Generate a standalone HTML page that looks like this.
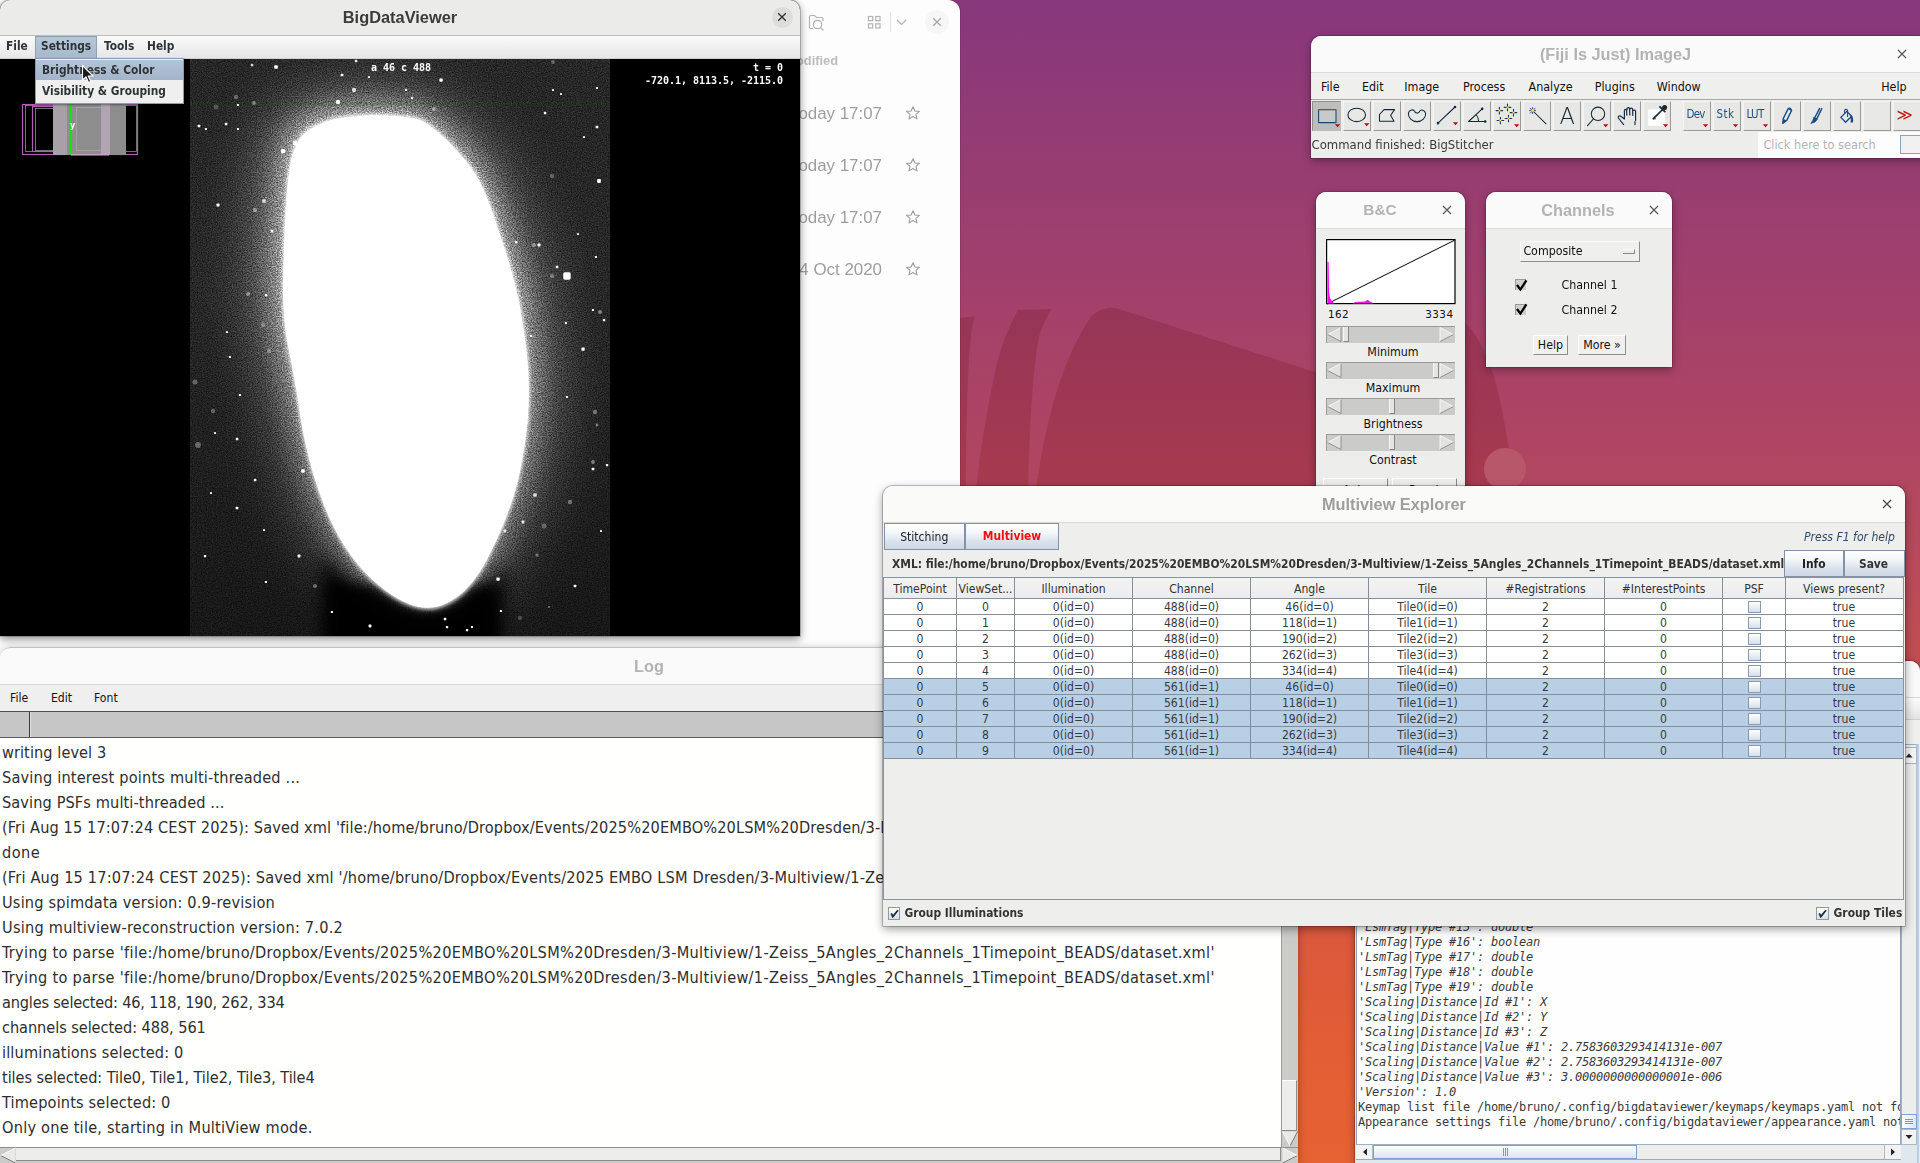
<!DOCTYPE html>
<html lang="en"><head><meta charset="utf-8"><title>Desktop</title>
<style>
html,body{margin:0;padding:0}
body{width:1920px;height:1163px;position:relative;overflow:hidden;background:#a1405f;font-family:"Liberation Sans","DejaVu Sans",sans-serif;color:#222}
.abs,.win,.win *{position:absolute;box-sizing:border-box}
.abs{position:absolute;box-sizing:border-box}
.win{overflow:hidden}
.t{white-space:pre;line-height:1}
.jf{font-family:"DejaVu Sans Condensed","Liberation Sans",sans-serif}
.lf{font-family:"Liberation Sans","DejaVu Sans",sans-serif}
.mono{font-family:"DejaVu Sans Mono","Liberation Mono",monospace}
.title{font-family:"Liberation Sans",sans-serif;font-weight:bold;font-size:16.3px;text-align:center;white-space:pre;line-height:1;will-change:transform}
svg{position:absolute;overflow:visible}
</style></head><body>
<!-- wallpaper -->
<div class="abs" id="wall" style="left:0;top:0;width:1920px;height:1163px;background:linear-gradient(180deg,#87377d 0%,#943c74 12%,#a2406b 25%,#ad4464 36%,#b84a5c 48%,#c8504c 62%,#d9573d 78%,#e35e35 90%,#e66233 100%)"></div>
<svg class="abs" style="left:0;top:0" width="1920" height="1163" viewBox="0 0 1920 1163">
 <defs><linearGradient id="wg1" gradientUnits="userSpaceOnUse" x1="0" y1="305" x2="0" y2="490"><stop offset="0" stop-color="#963558"/><stop offset="1" stop-color="#a73a4e"/></linearGradient>
 <linearGradient id="wg2" gradientUnits="userSpaceOnUse" x1="0" y1="305" x2="0" y2="490"><stop offset="0" stop-color="#a5416a"/><stop offset="1" stop-color="#ae4560"/></linearGradient></defs>
 <path d="M960 300 L1120 300 L1120 490 L960 490 Z" fill="url(#wg2)" opacity="0.55"/>
 <path d="M1104 309 Q1112 306 1122 310 L1315 372 L1320 374 L1320 490 L1036 490 Q1044 430 1059 384 Q1072 345 1090 318 Q1096 311 1104 309 Z" fill="url(#wg1)"/>
 <path d="M1018 310 L1051 309 Q1043 325 1040 333 Q1031 370 1028 490 L976 490 Q982 430 997 363 Q1004 335 1018 310 Z" fill="url(#wg1)"/>
 <path d="M960 318 L975 316 Q966 340 966 490 L960 490 Z" fill="url(#wg1)"/>
 <path d="M1465 322 Q1492 350 1504 420 L1516 490 L1465 490 Z" fill="url(#wg1)"/>
 <circle cx="1505" cy="469" r="21" fill="#b9576a"/>
</svg>
<style>
.ft{will-change:transform;font-family:"Liberation Sans",sans-serif;font-size:16.9px;color:#9e9e9e;white-space:pre;line-height:1;text-align:right;width:200px}
.logt{font-family:"DejaVu Sans Condensed","Liberation Sans",sans-serif;font-size:16.2px;letter-spacing:0.3px;color:#2e2e2e;white-space:pre;line-height:25px;left:2px;height:25px}
.jm{font-family:"DejaVu Sans Condensed","Liberation Sans",sans-serif;font-size:12px;color:#111;white-space:pre;line-height:1}
.con{font-family:"DejaVu Sans Mono","Liberation Mono",monospace;font-size:12px;letter-spacing:-0.225px;color:#3a3a3a;white-space:pre;line-height:15px;height:15px;left:1px}
.con.i{font-style:italic}
</style>
<!-- Files window (behind) -->
<div class="win" id="files" style="left:-20px;top:0;width:980px;height:720px;background:#fdfdfd;border-radius:0 12px 0 0;box-shadow:0 0 0 1px rgba(0,0,0,.1)">
<div style="left:945px;top:10px;width:24px;height:24px;border-radius:12px;background:#f6f6f6"></div>
<svg style="left:820px;top:0" width="160" height="44" viewBox="800 0 160 44" fill="none" stroke="#b2b2b2" stroke-width="1.2"><path d="M809.5 28.5 L809.5 17 Q809.5 15.5 811 15.5 L814.5 15.5 L816.5 17.5 L821.5 17.5 Q823 17.5 823 19 L823 21"/><path d="M809.5 28.5 L813 28.5"/><circle cx="817.5" cy="24.5" r="4.2"/><path d="M820.6 27.6 L823.5 30.5"/><rect x="868.5" y="16.5" width="4.2" height="4.2"/><rect x="875.8" y="16.5" width="4.2" height="4.2"/><rect x="868.5" y="23.8" width="4.2" height="4.2"/><rect x="875.8" y="23.8" width="4.2" height="4.2"/><path d="M890.5 12 L890.5 32" stroke="#e4e4e4"/><path d="M897 20 L901.5 24.5 L906 20"/><path d="M933.2 18.2 L940.8 25.8 M940.8 18.2 L933.2 25.8" stroke="#a8a8a8" stroke-width="1.3"/></svg>
<div class="t" style="left:658px;top:55.2px;width:200px;text-align:right;font-family:'Liberation Sans',sans-serif;font-weight:bold;font-size:12.8px;color:#bcbcbc;will-change:transform">Modified</div>
<div class="ft" style="left:702px;top:105.8px">Today 17:07</div>
<svg style="left:925px;top:105px" width="16" height="16" viewBox="0 0 16 16"><path d="M8 1.8 L9.9 6 L14.4 6.4 L11 9.4 L12 13.9 L8 11.5 L4 13.9 L5 9.4 L1.6 6.4 L6.1 6 Z" fill="none" stroke="#9d9d9d" stroke-width="1.1" stroke-linejoin="round"/></svg>
<div class="ft" style="left:702px;top:157.8px">Today 17:07</div>
<svg style="left:925px;top:157px" width="16" height="16" viewBox="0 0 16 16"><path d="M8 1.8 L9.9 6 L14.4 6.4 L11 9.4 L12 13.9 L8 11.5 L4 13.9 L5 9.4 L1.6 6.4 L6.1 6 Z" fill="none" stroke="#9d9d9d" stroke-width="1.1" stroke-linejoin="round"/></svg>
<div class="ft" style="left:702px;top:209.8px">Today 17:07</div>
<svg style="left:925px;top:209px" width="16" height="16" viewBox="0 0 16 16"><path d="M8 1.8 L9.9 6 L14.4 6.4 L11 9.4 L12 13.9 L8 11.5 L4 13.9 L5 9.4 L1.6 6.4 L6.1 6 Z" fill="none" stroke="#9d9d9d" stroke-width="1.1" stroke-linejoin="round"/></svg>
<div class="ft" style="left:702px;top:261.8px">4 Oct 2020</div>
<svg style="left:925px;top:261px" width="16" height="16" viewBox="0 0 16 16"><path d="M8 1.8 L9.9 6 L14.4 6.4 L11 9.4 L12 13.9 L8 11.5 L4 13.9 L5 9.4 L1.6 6.4 L6.1 6 Z" fill="none" stroke="#9d9d9d" stroke-width="1.1" stroke-linejoin="round"/></svg>
</div>
<!-- console window (behind) -->
<div class="win" id="console" style="left:1355px;top:661px;width:565px;height:502px;background:#fcfcfb;border-radius:10px 10px 0 0;box-shadow:0 0 0 1px rgba(90,30,20,.35),0 2px 8px rgba(0,0,0,.35)">
<div style="left:0;top:0;width:580px;height:37px;background:#fafafa;border-bottom:1px solid #d6d6d6"></div>
<div style="left:0;top:37px;width:580px;height:22px;background:linear-gradient(180deg,#fbfbfb 0%,#f1f1f1 45%,#e2e2e2 100%);border-bottom:1px solid #cfcfcf"></div>
<div style="left:0;top:59px;width:580px;height:443px;background:#efefee"></div>
<div style="left:0;top:83px;width:565px;height:419px;background:#dfe7ef"></div>
<div style="left:1px;top:83px;width:545px;height:401px;background:#fefefe;border:1px solid #8fa3bb"></div>
<div style="left:2px;top:62px;width:543px;height:421px;overflow:hidden">
<div class="con i" style="top:197px">'LsmTag|Type #15': double</div>
<div class="con i" style="top:212px">'LsmTag|Type #16': boolean</div>
<div class="con i" style="top:227px">'LsmTag|Type #17': double</div>
<div class="con i" style="top:242px">'LsmTag|Type #18': double</div>
<div class="con i" style="top:257px">'LsmTag|Type #19': double</div>
<div class="con i" style="top:272px">'Scaling|Distance|Id #1': X</div>
<div class="con i" style="top:287px">'Scaling|Distance|Id #2': Y</div>
<div class="con i" style="top:302px">'Scaling|Distance|Id #3': Z</div>
<div class="con i" style="top:317px">'Scaling|Distance|Value #1': 2.7583603293414131e-007</div>
<div class="con i" style="top:332px">'Scaling|Distance|Value #2': 2.7583603293414131e-007</div>
<div class="con i" style="top:347px">'Scaling|Distance|Value #3': 3.0000000000000001e-006</div>
<div class="con i" style="top:362px">'Version': 1.0</div>
<div class="con" style="top:377px">Keymap list file /home/bruno/.config/bigdataviewer/keymaps/keymaps.yaml not found, using defaults.</div>
<div class="con" style="top:392px">Appearance settings file /home/bruno/.config/bigdataviewer/appearance.yaml not found, using defaults.</div>
</div>
<div style="left:546px;top:83px;width:16px;height:401px;background:#ededec;border-left:1px solid #9fb0c4;border-right:1px solid #b8c2cc;border-top:1px solid #9fb0c4"></div>
<div style="left:546px;top:86px;width:16px;height:17px;background:#f4f4f4;border:1px solid #a9b4c0"></div>
<svg style="left:546px;top:86px" width="16" height="17" viewBox="0 0 16 17"><path d="M4.5 10.5 L8 6.5 L11.5 10.5 Z" fill="#222"/></svg>
<div style="left:546px;top:453px;width:16px;height:15px;background:linear-gradient(90deg,#fdfdfd,#dfe6ee);border:1px solid #7f9fd0"></div>
<svg style="left:546px;top:453px" width="16" height="15" viewBox="0 0 16 15"><path d="M4 5.5 H12 M4 7.5 H12 M4 9.5 H12" stroke="#8c98a6" stroke-width="1"/></svg>
<div style="left:546px;top:468px;width:16px;height:16px;background:#f2f2f2;border:1px solid #b0b8c2"></div>
<svg style="left:546px;top:468px" width="16" height="16" viewBox="0 0 16 16"><path d="M4.5 6 L11.5 6 L8 10 Z" fill="#222"/></svg>
<div style="left:1px;top:483px;width:545px;height:16px;background:#ededec;border-top:1px solid #9fb0c4;border-bottom:1px solid #a8a8a8"></div>
<div style="left:2px;top:484px;width:16px;height:14px;background:#f2f2f2;border-right:1px solid #b0b8c2"></div>
<svg style="left:2px;top:484px" width="16" height="14" viewBox="0 0 16 14"><path d="M10 3.5 L10 10.5 L6 7 Z" fill="#222"/></svg>
<div style="left:18px;top:484px;width:264px;height:14px;background:linear-gradient(180deg,#fdfdfd,#dbe4ee);border:1px solid #7f9fd0"></div>
<svg style="left:143px;top:484px" width="16" height="14" viewBox="0 0 16 14"><path d="M5.5 3 V11 M7.5 3 V11 M9.5 3 V11" stroke="#8c98a6" stroke-width="1"/></svg>
<div style="left:529px;top:484px;width:17px;height:14px;background:#f2f2f2;border-left:1px solid #b0b8c2"></div>
<svg style="left:530px;top:484px" width="16" height="14" viewBox="0 0 16 14"><path d="M6 3.5 L6 10.5 L10 7 Z" fill="#222"/></svg>
<div style="left:562px;top:83px;width:18px;height:419px;background:linear-gradient(90deg,#b9cde4 0,#b9cde4 2px,#e8eef5 2px)"></div>
</div>
<style>
.ijm{font-family:"DejaVu Sans Condensed","Liberation Sans",sans-serif;font-size:12.4px;color:#111;white-space:pre;line-height:1}
.awt{font-family:"DejaVu Sans Condensed","Liberation Sans",sans-serif;font-size:12.3px;color:#111;white-space:pre;line-height:1}
.tool{background:#e7e7e6;border-right:1px solid #9a9a9a;border-bottom:1px solid #9a9a9a;border-top:1px solid #f4f4f4;border-left:1px solid #f4f4f4;width:29px;height:30px;top:101px}
.tool.dn{background:#bdbdbc;border:1px solid #bdbdbc;border-top:1px solid #8e8e8e;border-left:1px solid #8e8e8e}
.tl{font-family:"DejaVu Sans Condensed","Liberation Sans",sans-serif;font-size:11.5px;color:#1d4f86;white-space:pre;line-height:1}
</style>
<!-- ImageJ main window -->
<div class="win" id="imagej" style="left:1311px;top:36px;width:620px;height:122px;background:#ededec;border-radius:10px 10px 0 0;box-shadow:0 0 0 1px rgba(60,10,50,.25),0 3px 9px rgba(0,0,0,.35)">
<div style="left:0;top:0;width:620px;height:37px;background:#fafafa;border-bottom:1px solid #d9d9d9"></div>
<div class="title" style="left:0;top:10px;width:609px;color:#b3b3b3;font-size:16.3px">(Fiji Is Just) ImageJ</div>
<svg style="left:585px;top:12px" width="12" height="12" viewBox="0 0 12 12"><path d="M2 2 L10 10 M10 2 L2 10" stroke="#5c5c5c" stroke-width="1.3" fill="none"/></svg>
<div style="left:0;top:37px;width:620px;height:27px;background:#efefee;border-bottom:1px solid #a9a9a9"></div>
<div class="ijm" style="left:10px;top:45px">File</div>
<div class="ijm" style="left:51px;top:45px">Edit</div>
<div class="ijm" style="left:93.29999999999995px;top:45px">Image</div>
<div class="ijm" style="left:152px;top:45px">Process</div>
<div class="ijm" style="left:217.5999999999999px;top:45px">Analyze</div>
<div class="ijm" style="left:283.79999999999995px;top:45px">Plugins</div>
<div class="ijm" style="left:345.79999999999995px;top:45px">Window</div>
<div class="ijm" style="left:570.2px;top:45px">Help</div>
<div style="left:0;top:64px;width:620px;height:31px;background:#eeeeed"></div>
<div class="tool dn" style="left:1px;top:65px"></div>
<div class="tool" style="left:31.5px;top:65px;width:28.5px"></div>
<div class="tool" style="left:61.5px;top:65px;width:28.5px"></div>
<div class="tool" style="left:91.5px;top:65px;width:28.5px"></div>
<div class="tool" style="left:121.5px;top:65px;width:28.5px"></div>
<div class="tool" style="left:151.5px;top:65px;width:28.5px"></div>
<div class="tool" style="left:181.5px;top:65px;width:28.5px"></div>
<div class="tool" style="left:211.5px;top:65px;width:28.5px"></div>
<div class="tool" style="left:241.5px;top:65px;width:28.5px"></div>
<div class="tool" style="left:271.5px;top:65px;width:28.5px"></div>
<div class="tool" style="left:301.5px;top:65px;width:28.5px"></div>
<div class="tool" style="left:331.5px;top:65px;width:28.5px"></div>
<div class="tool" style="left:371.5px;top:65px;width:28.5px"></div>
<div class="tool" style="left:401.5px;top:65px;width:28.5px"></div>
<div class="tool" style="left:431.5px;top:65px;width:28.5px"></div>
<div class="tool" style="left:461.5px;top:65px;width:28.5px"></div>
<div class="tool" style="left:491.5px;top:65px;width:28.5px"></div>
<div class="tool" style="left:521.5px;top:65px;width:28.5px"></div>
<div class="tool" style="left:551.5px;top:65px;width:28.5px"></div>
<div class="tool" style="left:581.5px;top:65px;width:28.5px"></div>
<svg style="left:0;top:0" width="620" height="122" viewBox="1311 36 620 122" fill="none" stroke="#14283a" stroke-width="1.05" stroke-linecap="round" stroke-linejoin="round">
<rect x="1318.6" y="109.8" width="17.4" height="12.8" fill="#c9c9c9" stroke="#15476f"/><path d="M1334.8 124.2 L1340.2 124.2 L1337.5 127.2 Z" fill="#b0101f" stroke="none"/>
<ellipse cx="1356.7" cy="114.9" rx="8.8" ry="6.7"/><path d="M1364 123.2 L1369.4 123.2 L1366.7 126.2 Z" fill="#b0101f" stroke="none"/>
<path d="M1379.5 121.3 L1379.5 114.5 L1384 109.6 L1394.6 109.6 L1390.6 115.3 L1394 121.3 Z"/>
<path d="M1414.6 111.2 C1415 113.6 1419 113.8 1419.6 111.4 C1420.6 109.2 1425 109.6 1425.6 113.4 C1426.2 117.6 1422 121.6 1417 121.6 C1412 121.6 1407.8 117.6 1408.4 113.4 C1409 109.6 1413.6 109 1414.6 111.2 Z"/>
<path d="M1438 123.2 L1455 107"/><circle cx="1438" cy="123.2" r="0.8" fill="#111"/><circle cx="1455" cy="107" r="0.8" fill="#111"/><path d="M1452.8 122.2 L1458.2 122.2 L1455.5 125.2 Z" fill="#b0101f" stroke="none"/>
<path d="M1482.2 108.8 L1468.6 121.5 L1485.2 121.5"/><path d="M1476.5 115 Q1478.6 117.6 1478.6 121.3" stroke-width="1"/><circle cx="1482.2" cy="108.8" r="0.8" fill="#111"/><circle cx="1485.2" cy="121.5" r="0.8" fill="#111"/>
<path d="M1496.1000000000001 110.6 H1502.7 M1499.4 107.3 V113.89999999999999" stroke="#15336a" stroke-width="1.1"/><rect x="1498.4" y="109.6" width="2" height="2" fill="#f5ea1c" stroke="none"/>
<path d="M1504.2 107.4 H1510.8 M1507.5 104.10000000000001 V110.7" stroke="#15336a" stroke-width="1.1"/><rect x="1506.5" y="106.4" width="2" height="2" fill="#f5ea1c" stroke="none"/>
<path d="M1510.2 112.6 H1516.8 M1513.5 109.3 V115.89999999999999" stroke="#15336a" stroke-width="1.1"/><rect x="1512.5" y="111.6" width="2" height="2" fill="#f5ea1c" stroke="none"/>
<path d="M1497.1000000000001 120.5 H1503.7 M1500.4 117.2 V123.8" stroke="#15336a" stroke-width="1.1"/><rect x="1499.4" y="119.5" width="2" height="2" fill="#f5ea1c" stroke="none"/>
<path d="M1505.2 118.5 H1511.8 M1508.5 115.2 V121.8" stroke="#15336a" stroke-width="1.1"/><rect x="1507.5" y="117.5" width="2" height="2" fill="#f5ea1c" stroke="none"/>
<path d="M1514 124.2 L1519.4 124.2 L1516.7 127.2 Z" fill="#b0101f" stroke="none"/>
<path d="M1534 112 L1546 123.8"/><path d="M1530.3 108.3 L1535 113 M1535 108.3 L1530.3 113 M1532.6 107.6 V113.6 M1529.6 110.6 H1535.6" stroke="#1a3a6a" stroke-width="0.9"/><circle cx="1532.6" cy="110.6" r="1.5" fill="#f5ea1c" stroke="none"/>
<text x="1567.2" y="123.6" text-anchor="middle" font-family="DejaVu Sans Light,DejaVu Sans,Liberation Sans,sans-serif" font-weight="200" font-size="22.6" fill="#14283a" stroke="none">A</text>
<circle cx="1598" cy="113.8" r="6.7"/><path d="M1593.4 119 L1587.5 125.6"/><path d="M1603 124.2 L1608.4 124.2 L1605.7 127.2 Z" fill="#b0101f" stroke="none"/>
<path d="M1623.6 124.6 L1618.4 118 Q1617.6 115.6 1620.4 116 L1624.4 119 L1624.4 110.2 Q1625.4 108.6 1626.6 110.2 L1626.8 115.2 M1627 110 L1627 108.4 Q1628.2 106.8 1629.6 108.4 L1629.8 115 M1630 109 Q1631.2 107.4 1632.6 109 L1632.8 115.4 M1633 110.6 Q1634.4 109.4 1635.6 111 L1635.6 120.4 M1635 121.6 L1635 124.6" stroke="#1a2f45" stroke-width="1.2"/>
<rect x="1648.2" y="109.4" width="16.8" height="16.4" fill="#fff" stroke="none"/><path d="M1653.4 118.6 L1661.8 110.2" stroke-width="1.6"/><path d="M1653 118.8 H1655.4" stroke-width="1"/><path d="M1660 106.8 L1664.8 111.6" stroke-width="1.8"/><circle cx="1664.6" cy="107.4" r="2.5" fill="#222" stroke="none"/><path d="M1662.8 124.2 L1668.2 124.2 L1665.5 127.2 Z" fill="#b0101f" stroke="none"/>
<path d="M1702.8 124.2 L1708.2 124.2 L1705.5 127.2 Z" fill="#b0101f" stroke="none"/><path d="M1732.8 124.2 L1738.2 124.2 L1735.5 127.2 Z" fill="#b0101f" stroke="none"/><path d="M1762.8 124.2 L1768.2 124.2 L1765.5 127.2 Z" fill="#b0101f" stroke="none"/>
<path d="M1789 109 L1791.6 110.4 L1786.6 120.6 L1782.8 123.4 L1783.2 118.6 L1788.2 108.6 Q1790.4 107 1791.6 110.4" stroke="#174a86" stroke-width="1.3"/><path d="M1783.2 118.8 L1786.4 120.6 L1782.8 123.6 Z" fill="#174a86" stroke="none"/>
<path d="M1819.6 108.4 L1814.6 118 M1821.8 108.6 L1817 118.4" stroke="#174a86" stroke-width="1.4"/><path d="M1814 117.6 L1817.4 119 Q1816 122.6 1810.8 123.4 Q1813 121 1814 117.6 Z" fill="#174a86" stroke="#174a86" stroke-width="0.8"/>
<path d="M1840.8 117.4 L1846.8 111.4 L1851.6 116.2 L1845.6 122.2 Z" stroke="#174a86" stroke-width="1.3"/><path d="M1844.6 113 V110.4 Q1846 108 1847.6 110.4 V116.4" stroke="#174a86" stroke-width="1.1"/><path d="M1851.4 115 Q1853.8 118 1853 122.4 L1850.6 122.4 Q1851.2 118.6 1850.2 116.6 Z" fill="#174a86" stroke="none"/>
<text x="1896.4" y="119.6" font-family="DejaVu Sans,Liberation Sans,sans-serif" font-size="15.5" fill="#c01818" stroke="none">≫</text>
</svg>
<div class="tl" style="left:375.5999999999999px;top:73.4px;letter-spacing:-0.9px">Dev</div>
<div class="tl" style="left:405.4000000000001px;top:73.4px;letter-spacing:0.5px">Stk</div>
<div class="tl" style="left:435.5999999999999px;top:73.4px;letter-spacing:-0.7px">LUT</div>
<div class="awt" style="left:0.5px;top:102px;font-size:13px;color:#3a3a3a">Command finished: BigStitcher</div>
<div style="left:447px;top:96px;width:170px;height:26px;background:#fdfdfd"></div>
<div class="awt" style="left:452.4000000000001px;top:103px;font-size:12.6px;color:#b4b4b4">Click here to search</div>
<div style="left:589px;top:99px;width:24px;height:19px;background:#f0f0f0;border:1px solid #8fa3b8"></div>
</div>
<!-- B&C window -->
<div class="win" id="bc" style="left:1316px;top:192px;width:149px;height:320px;background:#ededec;border-radius:10px 10px 0 0;box-shadow:0 0 0 1px rgba(60,10,40,.22),0 3px 9px rgba(0,0,0,.35)">
<div style="left:0;top:0;width:149px;height:37px;background:#fafafa;border-bottom:1px solid #dcdcdc"></div>
<div class="title" style="left:3.5px;top:10px;width:120px;color:#b3b3b3;font-size:15.4px">B&amp;C</div>
<svg style="left:125px;top:12px" width="12" height="12" viewBox="0 0 12 12"><path d="M2 2 L10 10 M10 2 L2 10" stroke="#5c5c5c" stroke-width="1.3" fill="none"/></svg>
<svg style="left:10px;top:47px" width="130" height="66" viewBox="1326 239 130 66"><rect x="1326.6" y="239.6" width="128.4" height="64" fill="#fff" stroke="#000" stroke-width="1.2"/><path d="M1327 304 L1455 240" stroke="#000" stroke-width="1"/><path d="M1327.4 303.5 L1327.4 262 L1328.6 262 L1329 292 L1330 298 L1332 301.5 L1335 303.5 Z" fill="#ff00ff"/><path d="M1353 303.5 L1355 302 L1365 301.6 L1367.6 299.8 L1370 301.6 L1374 303.5 Z" fill="#e020e0"/></svg>
<div class="awt" style="left:12px;top:117.39999999999998px;font-family:'DejaVu Sans',sans-serif;font-size:10.4px;letter-spacing:0.4px">162</div>
<div class="awt" style="left:69px;top:117.39999999999998px;width:68.4px;text-align:right;font-family:'DejaVu Sans',sans-serif;font-size:10.4px;letter-spacing:0.4px">3334</div>
<div style="left:10px;top:134px;width:129px;height:17px;background:#cbcbca;border-top:1px solid #9a9a9a;border-left:1px solid #9a9a9a"></div>
<svg style="left:10px;top:134px" width="129" height="17" viewBox="0 0 129 17"><path d="M15 1.5 L1.5 8.5 L15 15.5 Z" fill="#e2e2e1"/><path d="M15 1.5 L1.5 8.5" stroke="#f6f6f6" fill="none"/><path d="M1.5 8.5 L15 15.5 L15 1.5" stroke="#8a8a8a" stroke-width="0.9" fill="none"/><path d="M114 1.5 L127.5 8.5 L114 15.5 Z" fill="#e2e2e1"/><path d="M114 1.5 L114 15.5" stroke="#f6f6f6" fill="none"/><path d="M114 1.5 L127.5 8.5" stroke="#f6f6f6" fill="none"/><path d="M127.5 8.5 L114 15.5" stroke="#8a8a8a" stroke-width="0.9" fill="none"/></svg>
<div style="left:26.5px;top:135px;width:6px;height:15px;background:#e4e4e3;border-right:1px solid #858585;border-bottom:1px solid #858585;border-left:1px solid #f8f8f8"></div>
<div class="awt" style="left:10px;top:154px;width:134px;text-align:center">Minimum</div>
<div style="left:10px;top:170px;width:129px;height:17px;background:#cbcbca;border-top:1px solid #9a9a9a;border-left:1px solid #9a9a9a"></div>
<svg style="left:10px;top:170px" width="129" height="17" viewBox="0 0 129 17"><path d="M15 1.5 L1.5 8.5 L15 15.5 Z" fill="#e2e2e1"/><path d="M15 1.5 L1.5 8.5" stroke="#f6f6f6" fill="none"/><path d="M1.5 8.5 L15 15.5 L15 1.5" stroke="#8a8a8a" stroke-width="0.9" fill="none"/><path d="M114 1.5 L127.5 8.5 L114 15.5 Z" fill="#e2e2e1"/><path d="M114 1.5 L114 15.5" stroke="#f6f6f6" fill="none"/><path d="M114 1.5 L127.5 8.5" stroke="#f6f6f6" fill="none"/><path d="M127.5 8.5 L114 15.5" stroke="#8a8a8a" stroke-width="0.9" fill="none"/></svg>
<div style="left:117px;top:171px;width:6px;height:15px;background:#e4e4e3;border-right:1px solid #858585;border-bottom:1px solid #858585;border-left:1px solid #f8f8f8"></div>
<div class="awt" style="left:10px;top:190px;width:134px;text-align:center">Maximum</div>
<div style="left:10px;top:206px;width:129px;height:17px;background:#cbcbca;border-top:1px solid #9a9a9a;border-left:1px solid #9a9a9a"></div>
<svg style="left:10px;top:206px" width="129" height="17" viewBox="0 0 129 17"><path d="M15 1.5 L1.5 8.5 L15 15.5 Z" fill="#e2e2e1"/><path d="M15 1.5 L1.5 8.5" stroke="#f6f6f6" fill="none"/><path d="M1.5 8.5 L15 15.5 L15 1.5" stroke="#8a8a8a" stroke-width="0.9" fill="none"/><path d="M114 1.5 L127.5 8.5 L114 15.5 Z" fill="#e2e2e1"/><path d="M114 1.5 L114 15.5" stroke="#f6f6f6" fill="none"/><path d="M114 1.5 L127.5 8.5" stroke="#f6f6f6" fill="none"/><path d="M127.5 8.5 L114 15.5" stroke="#8a8a8a" stroke-width="0.9" fill="none"/></svg>
<div style="left:72.5px;top:207px;width:6px;height:15px;background:#e4e4e3;border-right:1px solid #858585;border-bottom:1px solid #858585;border-left:1px solid #f8f8f8"></div>
<div class="awt" style="left:10px;top:226px;width:134px;text-align:center">Brightness</div>
<div style="left:10px;top:242px;width:129px;height:17px;background:#cbcbca;border-top:1px solid #9a9a9a;border-left:1px solid #9a9a9a"></div>
<svg style="left:10px;top:242px" width="129" height="17" viewBox="0 0 129 17"><path d="M15 1.5 L1.5 8.5 L15 15.5 Z" fill="#e2e2e1"/><path d="M15 1.5 L1.5 8.5" stroke="#f6f6f6" fill="none"/><path d="M1.5 8.5 L15 15.5 L15 1.5" stroke="#8a8a8a" stroke-width="0.9" fill="none"/><path d="M114 1.5 L127.5 8.5 L114 15.5 Z" fill="#e2e2e1"/><path d="M114 1.5 L114 15.5" stroke="#f6f6f6" fill="none"/><path d="M114 1.5 L127.5 8.5" stroke="#f6f6f6" fill="none"/><path d="M127.5 8.5 L114 15.5" stroke="#8a8a8a" stroke-width="0.9" fill="none"/></svg>
<div style="left:72.5px;top:243px;width:6px;height:15px;background:#e4e4e3;border-right:1px solid #858585;border-bottom:1px solid #858585;border-left:1px solid #f8f8f8"></div>
<div class="awt" style="left:10px;top:262px;width:134px;text-align:center">Contrast</div>
<div style="left:7px;top:286px;width:65px;height:22px;background:#eeeeed;border-top:1px solid #fff;border-left:1px solid #fff;border-right:1px solid #8a8a8a;border-bottom:1px solid #8a8a8a"></div>
<div class="awt" style="left:7px;top:291.6px;width:65px;text-align:center">Auto</div>
<div style="left:76px;top:286px;width:65px;height:22px;background:#eeeeed;border-top:1px solid #fff;border-left:1px solid #fff;border-right:1px solid #8a8a8a;border-bottom:1px solid #8a8a8a"></div>
<div class="awt" style="left:76px;top:291.6px;width:65px;text-align:center">Reset</div>
</div>
<!-- Channels window -->
<div class="win" id="channels" style="left:1486px;top:192px;width:186px;height:175px;background:#ededec;border-radius:10px 10px 0 0;box-shadow:0 0 0 1px rgba(60,10,40,.22),0 3px 9px rgba(0,0,0,.35)">
<div style="left:0;top:0;width:186px;height:37px;background:#fafafa;border-bottom:1px solid #dcdcdc"></div>
<div class="title" style="left:21.5px;top:10px;width:140px;color:#b3b3b3;font-size:16.3px">Channels</div>
<svg style="left:162px;top:12px" width="12" height="12" viewBox="0 0 12 12"><path d="M2 2 L10 10 M10 2 L2 10" stroke="#5c5c5c" stroke-width="1.3" fill="none"/></svg>
<div style="left:33.5px;top:48.5px;width:120.5px;height:21.5px;background:#efefee;border-top:1px solid #fbfbfb;border-left:1px solid #fbfbfb;border-right:1px solid #8e8e8e;border-bottom:1px solid #8e8e8e"></div>
<div class="awt" style="left:37.40000000000009px;top:53.30000000000001px">Composite</div>
<div style="left:137px;top:56.599999999999994px;width:12px;height:5px;background:#ececec;border-right:1px solid #8a8a8a;border-bottom:1px solid #8a8a8a;border-top:1px solid #fafafa"></div>
<div style="left:29px;top:87.0px;width:11px;height:11px;background:#cfcfcf;border-top:1px solid #9b9b9b;border-left:1px solid #9b9b9b"></div>
<svg style="left:28px;top:84.5px" width="16" height="16" viewBox="0 0 16 16"><path d="M3 8 L6.4 12.6 L12.4 3.4" stroke="#000" stroke-width="2.3" fill="none" stroke-linejoin="miter"/></svg>
<div class="awt" style="left:75.5px;top:86.89999999999998px">Channel 1</div>
<div style="left:29px;top:111.80000000000001px;width:11px;height:11px;background:#cfcfcf;border-top:1px solid #9b9b9b;border-left:1px solid #9b9b9b"></div>
<svg style="left:28px;top:109.30000000000001px" width="16" height="16" viewBox="0 0 16 16"><path d="M3 8 L6.4 12.6 L12.4 3.4" stroke="#000" stroke-width="2.3" fill="none" stroke-linejoin="miter"/></svg>
<div class="awt" style="left:75.5px;top:111.69999999999999px">Channel 2</div>
<div style="left:46.700000000000045px;top:142.7px;width:35.5px;height:20px;background:#f0f0ef;border-top:1px solid #fcfcfc;border-left:1px solid #fcfcfc;border-right:1px solid #8e8e8e;border-bottom:1px solid #8e8e8e"></div>
<div class="awt" style="left:46.700000000000045px;top:147.39999999999998px;width:35.5px;text-align:center">Help</div>
<div style="left:91.79999999999995px;top:142.7px;width:48.4px;height:20px;background:#f0f0ef;border-top:1px solid #fcfcfc;border-left:1px solid #fcfcfc;border-right:1px solid #8e8e8e;border-bottom:1px solid #8e8e8e"></div>
<div class="awt" style="left:91.79999999999995px;top:147.39999999999998px;width:48.4px;text-align:center">More »</div>
</div>
<!-- Log window -->
<div class="win" id="log" style="left:0;top:647px;width:1298px;height:516px;background:#fffffd;border-radius:10px 10px 0 0;box-shadow:0 2px 8px rgba(0,0,0,.3)">
<div style="left:0;top:0;width:1298px;height:38px;background:#fafafa;border-bottom:1px solid #dadada;border-top:1px solid #c4c4c4;border-radius:10px 10px 0 0"></div>
<div class="title" style="left:0;top:11px;width:1298px;color:#b3b3b3;font-size:16.3px">Log</div>
<div style="left:0;top:38px;width:1298px;height:27px;background:#efefef"></div>
<div class="jm" style="left:10px;top:45px;font-size:12.1px">File</div>
<div class="jm" style="left:51px;top:45px;font-size:12.1px">Edit</div>
<div class="jm" style="left:94px;top:45px;font-size:12.1px">Font</div>
<div style="left:0;top:64px;width:1298px;height:27px;background:#c6c6c6;border-top:1px solid #505050;border-bottom:1px solid #5a5a5a"></div>
<div style="left:29px;top:65px;width:1px;height:25px;background:#3c3c3c"></div>
<div style="left:30px;top:65px;width:1px;height:25px;background:#e2e2e2"></div>
<div style="left:0;top:91px;width:1282px;height:409px;overflow:hidden">
<div class="logt" style="top:2.1999999999999993px;letter-spacing:0.06px">writing level 3</div>
<div class="logt" style="top:27.2px;letter-spacing:0.18px">Saving interest points multi-threaded ...</div>
<div class="logt" style="top:52.2px;letter-spacing:0.1px">Saving PSFs multi-threaded ...</div>
<div class="logt" style="top:77.2px;letter-spacing:0.11px">(Fri Aug 15 17:07:24 CEST 2025): Saved xml 'file:/home/bruno/Dropbox/Events/2025%20EMBO%20LSM%20Dresden/3-Multiview/1-Zeiss_5Angles_2Channels_1Timepoint_BEADS/dataset.xml'</div>
<div class="logt" style="top:102.2px;letter-spacing:0.48px">done</div>
<div class="logt" style="top:127.2px;letter-spacing:0.17px">(Fri Aug 15 17:07:24 CEST 2025): Saved xml '/home/bruno/Dropbox/Events/2025 EMBO LSM Dresden/3-Multiview/1-Zeiss_5Angles_2Channels_1Timepoint_BEADS/dataset.xml'</div>
<div class="logt" style="top:152.2px;letter-spacing:0.19px">Using spimdata version: 0.9-revision</div>
<div class="logt" style="top:177.2px;letter-spacing:0.22px">Using multiview-reconstruction version: 7.0.2</div>
<div class="logt" style="top:202.2px;letter-spacing:0.31px">Trying to parse 'file:/home/bruno/Dropbox/Events/2025%20EMBO%20LSM%20Dresden/3-Multiview/1-Zeiss_5Angles_2Channels_1Timepoint_BEADS/dataset.xml'</div>
<div class="logt" style="top:227.2px;letter-spacing:0.31px">Trying to parse 'file:/home/bruno/Dropbox/Events/2025%20EMBO%20LSM%20Dresden/3-Multiview/1-Zeiss_5Angles_2Channels_1Timepoint_BEADS/dataset.xml'</div>
<div class="logt" style="top:252.2px;letter-spacing:-0.2px">angles selected: 46, 118, 190, 262, 334</div>
<div class="logt" style="top:277.2px;letter-spacing:-0.07px">channels selected: 488, 561</div>
<div class="logt" style="top:302.2px;letter-spacing:0.13px">illuminations selected: 0</div>
<div class="logt" style="top:327.2px;letter-spacing:-0.08px">tiles selected: Tile0, Tile1, Tile2, Tile3, Tile4</div>
<div class="logt" style="top:352.2px;letter-spacing:0.15px">Timepoints selected: 0</div>
<div class="logt" style="top:377.2px;letter-spacing:0.22px">Only one tile, starting in MultiView mode.</div>
</div>
<div style="left:1281px;top:91px;width:17px;height:409px;background:#cbcbc8;border-left:1px solid #9a9a9a"></div>
<div style="left:1282px;top:433px;width:15px;height:51px;background:#ededeb;border-right:1px solid #8c8c8c;border-bottom:1px solid #8c8c8c;border-top:1px solid #fff"></div>
<svg style="left:1282px;top:484px" width="16" height="16" viewBox="0 0 16 16"><path d="M0.5 0.5 L15.5 0.5 L8 15 Z" fill="#e9e9e7"/><path d="M15.5 0.5 L8 15" stroke="#7a7a7a" stroke-width="1" fill="none"/><path d="M0.5 0.5 L8 15" stroke="#f8f8f8" stroke-width="1" fill="none"/></svg>
<div style="left:0;top:500px;width:1298px;height:16px;background:#cbcbc8;border-top:1px solid #8e8e8e"></div>
<div style="left:16px;top:501px;width:1265px;height:13px;background:#ededeb;border-right:1px solid #8c8c8c;border-bottom:1px solid #8c8c8c"></div>
<svg style="left:0;top:501px" width="16" height="15" viewBox="0 0 16 15"><path d="M15.5 0 L15.5 15 L0.5 7.5 Z" fill="#e9e9e7"/><path d="M15.5 15 L0.5 7.5" stroke="#7a7a7a" fill="none"/><path d="M15.5 0 L0.5 7.5" stroke="#f8f8f8" fill="none"/></svg>
<svg style="left:1282px;top:501px" width="16" height="15" viewBox="0 0 16 15"><path d="M0.5 0 L0.5 15 L15.5 7.5 Z" fill="#e9e9e7"/><path d="M0.5 15 L15.5 7.5" stroke="#7a7a7a" fill="none"/><path d="M0.5 0 L15.5 7.5" stroke="#f8f8f8" fill="none"/></svg>
</div>
<style>
.mv{font-family:"DejaVu Sans Condensed","Liberation Sans",sans-serif;font-size:12.1px;color:#363b42;white-space:pre;line-height:1}
.mvb{font-weight:bold;font-size:11.9px}
.btn{background:linear-gradient(180deg,#ffffff 0%,#f3f6f9 35%,#d9e2ec 70%,#ccd8e4 100%);border:1px solid #8393a6}
.cell{text-align:center;height:16px;line-height:17.6px}
.cb{width:10px;height:10px;background:linear-gradient(180deg,#ffffff,#d4dfea);border:1px solid #8a99ab}
</style>
<!-- Multiview Explorer window -->
<div class="win" id="mve" style="left:883px;top:486px;width:1022px;height:440px;background:#eeeeed;border-radius:10px 10px 0 0;box-shadow:0 0 0 1px rgba(0,0,0,.22),0 3px 10px rgba(0,0,0,.4)">
<div style="left:0;top:0;width:1022px;height:37px;background:#fafaf9;border-bottom:1px solid #d8d8d8"></div>
<div class="title" style="left:0;top:10px;width:1022px;color:#9e9e9e;font-size:16.3px">Multiview Explorer</div>
<svg style="left:998px;top:12px" width="12" height="12" viewBox="0 0 12 12"><path d="M2 2 L10 10 M10 2 L2 10" stroke="#4a4a4a" stroke-width="1.3" fill="none"/></svg>
<div class="btn" style="left:0.5px;top:37px;width:81.5px;height:27px"></div>
<div class="btn" style="left:82px;top:37px;width:94px;height:27px"></div>
<div class="mv" style="left:0.5px;top:45.299999999999955px;width:81.5px;text-align:center;color:#222">Stitching</div>
<div class="mv mvb" style="left:82px;top:45.299999999999955px;width:94px;text-align:center;color:#ee1010">Multiview</div>
<div class="mv" style="left:817px;top:45.299999999999955px;width:195px;text-align:right;font-style:italic;color:#2d4a66">Press F1 for help</div>
<div class="mv mvb" style="left:9px;top:72.5px;color:#333">XML: file:/home/bruno/Dropbox/Events/2025%20EMBO%20LSM%20Dresden/3-Multiview/1-Zeiss_5Angles_2Channels_1Timepoint_BEADS/dataset.xml</div>
<div class="btn" style="left:901px;top:64px;width:59.5px;height:27px"></div>
<div class="btn" style="left:960.5px;top:64px;width:61.5px;height:27px"></div>
<div class="mv mvb" style="left:901px;top:72.5px;width:59.5px;text-align:center;color:#222">Info</div>
<div class="mv mvb" style="left:960.5px;top:72.5px;width:60px;text-align:center;color:#333">Save</div>
<div style="left:0px;top:91px;width:1021px;height:323px;background:#eeeeed;border:1px solid #8893a0"></div>
<div style="left:1px;top:92px;width:1019px;height:21px;background:linear-gradient(180deg,#f3f3f2 0%,#efefef 60%,#e8ecf0 100%);border-bottom:1px solid #8893a0"></div>
<div class="mv" style="left:1px;top:97px;width:72px;text-align:center;color:#333">TimePoint</div>
<div class="mv" style="left:74px;top:97px;width:57px;text-align:center;color:#333">ViewSet...</div>
<div class="mv" style="left:132px;top:97px;width:117px;text-align:center;color:#333">Illumination</div>
<div class="mv" style="left:250px;top:97px;width:117px;text-align:center;color:#333">Channel</div>
<div class="mv" style="left:368px;top:97px;width:117px;text-align:center;color:#333">Angle</div>
<div class="mv" style="left:486px;top:97px;width:117px;text-align:center;color:#333">Tile</div>
<div class="mv" style="left:604px;top:97px;width:117px;text-align:center;color:#333">#Registrations</div>
<div class="mv" style="left:722px;top:97px;width:117px;text-align:center;color:#333">#InterestPoints</div>
<div class="mv" style="left:840px;top:97px;width:62px;text-align:center;color:#333">PSF</div>
<div class="mv" style="left:903px;top:97px;width:116px;text-align:center;color:#333">Views present?</div>
<div style="left:1px;top:113px;width:1019px;height:16px;background:#ffffff;border-bottom:1px solid #848e98"></div>
<div class="mv cell" style="left:1px;top:113px;width:72px">0</div>
<div class="mv cell" style="left:74px;top:113px;width:57px">0</div>
<div class="mv cell" style="left:132px;top:113px;width:117px">0(id=0)</div>
<div class="mv cell" style="left:250px;top:113px;width:117px">488(id=0)</div>
<div class="mv cell" style="left:368px;top:113px;width:117px">46(id=0)</div>
<div class="mv cell" style="left:486px;top:113px;width:117px">Tile0(id=0)</div>
<div class="mv cell" style="left:604px;top:113px;width:117px">2</div>
<div class="mv cell" style="left:722px;top:113px;width:117px">0</div>
<div class="cb" style="left:865.0px;top:114.5px;width:12.5px;height:12.5px"></div>
<div class="mv cell" style="left:903px;top:113px;width:116px">true</div>
<div style="left:1px;top:129px;width:1019px;height:16px;background:#ffffff;border-bottom:1px solid #848e98"></div>
<div class="mv cell" style="left:1px;top:129px;width:72px">0</div>
<div class="mv cell" style="left:74px;top:129px;width:57px">1</div>
<div class="mv cell" style="left:132px;top:129px;width:117px">0(id=0)</div>
<div class="mv cell" style="left:250px;top:129px;width:117px">488(id=0)</div>
<div class="mv cell" style="left:368px;top:129px;width:117px">118(id=1)</div>
<div class="mv cell" style="left:486px;top:129px;width:117px">Tile1(id=1)</div>
<div class="mv cell" style="left:604px;top:129px;width:117px">2</div>
<div class="mv cell" style="left:722px;top:129px;width:117px">0</div>
<div class="cb" style="left:865.0px;top:130.5px;width:12.5px;height:12.5px"></div>
<div class="mv cell" style="left:903px;top:129px;width:116px">true</div>
<div style="left:1px;top:145px;width:1019px;height:16px;background:#ffffff;border-bottom:1px solid #848e98"></div>
<div class="mv cell" style="left:1px;top:145px;width:72px">0</div>
<div class="mv cell" style="left:74px;top:145px;width:57px">2</div>
<div class="mv cell" style="left:132px;top:145px;width:117px">0(id=0)</div>
<div class="mv cell" style="left:250px;top:145px;width:117px">488(id=0)</div>
<div class="mv cell" style="left:368px;top:145px;width:117px">190(id=2)</div>
<div class="mv cell" style="left:486px;top:145px;width:117px">Tile2(id=2)</div>
<div class="mv cell" style="left:604px;top:145px;width:117px">2</div>
<div class="mv cell" style="left:722px;top:145px;width:117px">0</div>
<div class="cb" style="left:865.0px;top:146.5px;width:12.5px;height:12.5px"></div>
<div class="mv cell" style="left:903px;top:145px;width:116px">true</div>
<div style="left:1px;top:161px;width:1019px;height:16px;background:#ffffff;border-bottom:1px solid #848e98"></div>
<div class="mv cell" style="left:1px;top:161px;width:72px">0</div>
<div class="mv cell" style="left:74px;top:161px;width:57px">3</div>
<div class="mv cell" style="left:132px;top:161px;width:117px">0(id=0)</div>
<div class="mv cell" style="left:250px;top:161px;width:117px">488(id=0)</div>
<div class="mv cell" style="left:368px;top:161px;width:117px">262(id=3)</div>
<div class="mv cell" style="left:486px;top:161px;width:117px">Tile3(id=3)</div>
<div class="mv cell" style="left:604px;top:161px;width:117px">2</div>
<div class="mv cell" style="left:722px;top:161px;width:117px">0</div>
<div class="cb" style="left:865.0px;top:162.5px;width:12.5px;height:12.5px"></div>
<div class="mv cell" style="left:903px;top:161px;width:116px">true</div>
<div style="left:1px;top:177px;width:1019px;height:16px;background:#ffffff;border-bottom:1px solid #848e98"></div>
<div class="mv cell" style="left:1px;top:177px;width:72px">0</div>
<div class="mv cell" style="left:74px;top:177px;width:57px">4</div>
<div class="mv cell" style="left:132px;top:177px;width:117px">0(id=0)</div>
<div class="mv cell" style="left:250px;top:177px;width:117px">488(id=0)</div>
<div class="mv cell" style="left:368px;top:177px;width:117px">334(id=4)</div>
<div class="mv cell" style="left:486px;top:177px;width:117px">Tile4(id=4)</div>
<div class="mv cell" style="left:604px;top:177px;width:117px">2</div>
<div class="mv cell" style="left:722px;top:177px;width:117px">0</div>
<div class="cb" style="left:865.0px;top:178.5px;width:12.5px;height:12.5px"></div>
<div class="mv cell" style="left:903px;top:177px;width:116px">true</div>
<div style="left:1px;top:193px;width:1019px;height:16px;background:#b8cfe5;border-bottom:1px solid #848e98"></div>
<div class="mv cell" style="left:1px;top:193px;width:72px">0</div>
<div class="mv cell" style="left:74px;top:193px;width:57px">5</div>
<div class="mv cell" style="left:132px;top:193px;width:117px">0(id=0)</div>
<div class="mv cell" style="left:250px;top:193px;width:117px">561(id=1)</div>
<div class="mv cell" style="left:368px;top:193px;width:117px">46(id=0)</div>
<div class="mv cell" style="left:486px;top:193px;width:117px">Tile0(id=0)</div>
<div class="mv cell" style="left:604px;top:193px;width:117px">2</div>
<div class="mv cell" style="left:722px;top:193px;width:117px">0</div>
<div class="cb" style="left:865.0px;top:194.5px;width:12.5px;height:12.5px"></div>
<div class="mv cell" style="left:903px;top:193px;width:116px">true</div>
<div style="left:1px;top:209px;width:1019px;height:16px;background:#b8cfe5;border-bottom:1px solid #848e98"></div>
<div class="mv cell" style="left:1px;top:209px;width:72px">0</div>
<div class="mv cell" style="left:74px;top:209px;width:57px">6</div>
<div class="mv cell" style="left:132px;top:209px;width:117px">0(id=0)</div>
<div class="mv cell" style="left:250px;top:209px;width:117px">561(id=1)</div>
<div class="mv cell" style="left:368px;top:209px;width:117px">118(id=1)</div>
<div class="mv cell" style="left:486px;top:209px;width:117px">Tile1(id=1)</div>
<div class="mv cell" style="left:604px;top:209px;width:117px">2</div>
<div class="mv cell" style="left:722px;top:209px;width:117px">0</div>
<div class="cb" style="left:865.0px;top:210.5px;width:12.5px;height:12.5px"></div>
<div class="mv cell" style="left:903px;top:209px;width:116px">true</div>
<div style="left:1px;top:225px;width:1019px;height:16px;background:#b8cfe5;border-bottom:1px solid #848e98"></div>
<div class="mv cell" style="left:1px;top:225px;width:72px">0</div>
<div class="mv cell" style="left:74px;top:225px;width:57px">7</div>
<div class="mv cell" style="left:132px;top:225px;width:117px">0(id=0)</div>
<div class="mv cell" style="left:250px;top:225px;width:117px">561(id=1)</div>
<div class="mv cell" style="left:368px;top:225px;width:117px">190(id=2)</div>
<div class="mv cell" style="left:486px;top:225px;width:117px">Tile2(id=2)</div>
<div class="mv cell" style="left:604px;top:225px;width:117px">2</div>
<div class="mv cell" style="left:722px;top:225px;width:117px">0</div>
<div class="cb" style="left:865.0px;top:226.5px;width:12.5px;height:12.5px"></div>
<div class="mv cell" style="left:903px;top:225px;width:116px">true</div>
<div style="left:1px;top:241px;width:1019px;height:16px;background:#b8cfe5;border-bottom:1px solid #848e98"></div>
<div class="mv cell" style="left:1px;top:241px;width:72px">0</div>
<div class="mv cell" style="left:74px;top:241px;width:57px">8</div>
<div class="mv cell" style="left:132px;top:241px;width:117px">0(id=0)</div>
<div class="mv cell" style="left:250px;top:241px;width:117px">561(id=1)</div>
<div class="mv cell" style="left:368px;top:241px;width:117px">262(id=3)</div>
<div class="mv cell" style="left:486px;top:241px;width:117px">Tile3(id=3)</div>
<div class="mv cell" style="left:604px;top:241px;width:117px">2</div>
<div class="mv cell" style="left:722px;top:241px;width:117px">0</div>
<div class="cb" style="left:865.0px;top:242.5px;width:12.5px;height:12.5px"></div>
<div class="mv cell" style="left:903px;top:241px;width:116px">true</div>
<div style="left:1px;top:257px;width:1019px;height:16px;background:#b8cfe5;border-bottom:1px solid #848e98"></div>
<div class="mv cell" style="left:1px;top:257px;width:72px">0</div>
<div class="mv cell" style="left:74px;top:257px;width:57px">9</div>
<div class="mv cell" style="left:132px;top:257px;width:117px">0(id=0)</div>
<div class="mv cell" style="left:250px;top:257px;width:117px">561(id=1)</div>
<div class="mv cell" style="left:368px;top:257px;width:117px">334(id=4)</div>
<div class="mv cell" style="left:486px;top:257px;width:117px">Tile4(id=4)</div>
<div class="mv cell" style="left:604px;top:257px;width:117px">2</div>
<div class="mv cell" style="left:722px;top:257px;width:117px">0</div>
<div class="cb" style="left:865.0px;top:258.5px;width:12.5px;height:12.5px"></div>
<div class="mv cell" style="left:903px;top:257px;width:116px">true</div>
<div style="left:73px;top:92px;width:1px;height:181px;background:#848e98"></div>
<div style="left:131px;top:92px;width:1px;height:181px;background:#848e98"></div>
<div style="left:249px;top:92px;width:1px;height:181px;background:#848e98"></div>
<div style="left:367px;top:92px;width:1px;height:181px;background:#848e98"></div>
<div style="left:485px;top:92px;width:1px;height:181px;background:#848e98"></div>
<div style="left:603px;top:92px;width:1px;height:181px;background:#848e98"></div>
<div style="left:721px;top:92px;width:1px;height:181px;background:#848e98"></div>
<div style="left:839px;top:92px;width:1px;height:181px;background:#848e98"></div>
<div style="left:902px;top:92px;width:1px;height:181px;background:#848e98"></div>
<div class="cb" style="left:5px;top:421.20000000000005px;width:12.4px;height:12.4px"></div>
<svg style="left:5px;top:421.20000000000005px" width="13" height="13" viewBox="0 0 13 13"><path d="M3.2 6.4 L4.8 9.6 L10 3.2" stroke="#1e2a36" stroke-width="1.8" fill="none"/></svg>
<div class="mv mvb" style="left:21.399999999999977px;top:422.29999999999995px;color:#333">Group Illuminations</div>
<div class="cb" style="left:933.4000000000001px;top:421.20000000000005px;width:12.4px;height:12.4px"></div>
<svg style="left:933.4000000000001px;top:421.20000000000005px" width="13" height="13" viewBox="0 0 13 13"><path d="M3.2 6.4 L4.8 9.6 L10 3.2" stroke="#1e2a36" stroke-width="1.8" fill="none"/></svg>
<div class="mv mvb" style="left:950.5999999999999px;top:422.29999999999995px;color:#333">Group Tiles</div>
</div>
<style>
.jb{font-family:"DejaVu Sans Condensed","Liberation Sans",sans-serif;font-weight:bold;font-size:11.8px;color:#2e3436}
.ov{font-family:"DejaVu Sans Mono","Liberation Mono",monospace;font-weight:bold;font-size:10px;letter-spacing:-0.02px;color:#fff;will-change:transform}
</style>
<!-- BigDataViewer window -->
<div class="win" id="bdv" style="left:0;top:0;width:800px;height:636px;border-radius:10px 10px 0 0;background:#000;box-shadow:0 3px 9px rgba(0,0,0,.45),0 0 0 1px rgba(0,0,0,.18)">
<div style="left:0;top:0;width:800px;height:36px;background:#ebebea;border-bottom:1px solid #bdbdbb"></div>
<div class="title" style="left:0;top:9px;width:800px;color:#3b3b3b;font-size:16.4px">BigDataViewer</div>
<div style="left:771.5px;top:6.5px;width:21px;height:21px;border-radius:11px;background:#dddddc"></div>
<svg style="left:770px;top:5px" width="24" height="24" viewBox="0 0 24 24"><path d="M8.2 8.2 L15.8 15.8 M15.8 8.2 L8.2 15.8" stroke="#333" stroke-width="1.35" fill="none"/></svg>
<div style="left:0;top:36px;width:800px;height:23px;background:linear-gradient(180deg,#fbfbfb 0%,#f1f1f1 45%,#e6e6e6 100%);border-bottom:1px solid #d0d0d0"></div>
<div style="left:35px;top:36px;width:62px;height:22px;background:linear-gradient(180deg,#b7c7da,#a7b8cc);border:1px solid #8fa0b5;border-bottom:none"></div>
<div class="t jb" style="left:6px;top:41px">File</div>
<div class="t jb" style="left:41px;top:41px">Settings</div>
<div class="t jb" style="left:104px;top:41px">Tools</div>
<div class="t jb" style="left:147px;top:41px">Help</div>
<svg style="left:0;top:59px" width="800" height="577" viewBox="0 59 800 577">
<defs>
<filter id="nz" x="0" y="0" width="100%" height="100%" color-interpolation-filters="sRGB"><feTurbulence type="fractalNoise" baseFrequency="0.8" numOctaves="2" seed="11"/><feColorMatrix type="matrix" values="0 0 0 0 0 0 0 0 0 0 0 0 0 0 0 1.15 0 0 0 -0.25"/></filter>
<filter id="b30" x="-50%" y="-50%" width="200%" height="200%"><feGaussianBlur stdDeviation="26"/></filter>
<filter id="b12" x="-50%" y="-50%" width="200%" height="200%"><feGaussianBlur stdDeviation="11"/></filter>
<filter id="b3" x="-20%" y="-20%" width="140%" height="140%"><feGaussianBlur stdDeviation="2"/></filter>
<filter id="b1" x="-50%" y="-50%" width="200%" height="200%"><feGaussianBlur stdDeviation="0.7"/></filter>
<filter id="b2" x="-50%" y="-50%" width="200%" height="200%"><feGaussianBlur stdDeviation="1.6"/></filter>
<filter id="b6" x="-50%" y="-50%" width="200%" height="200%"><feGaussianBlur stdDeviation="6"/></filter>
<linearGradient id="shg" gradientUnits="userSpaceOnUse" x1="0" y1="455" x2="0" y2="545"><stop offset="0" stop-color="#000"/><stop offset="1" stop-color="#fff"/></linearGradient><mask id="shm" maskUnits="userSpaceOnUse" x="190" y="59" width="420" height="577"><rect x="190" y="59" width="420" height="577" fill="url(#shg)"/></mask>
<filter id="b8" x="-50%" y="-50%" width="200%" height="200%"><feGaussianBlur stdDeviation="9"/></filter>
<linearGradient id="dkg" gradientUnits="userSpaceOnUse" x1="0" y1="280" x2="0" y2="636"><stop offset="0" stop-color="#000" stop-opacity="0"/><stop offset="1" stop-color="#000" stop-opacity="0.4"/></linearGradient>
<clipPath id="fld"><rect x="190" y="59" width="420" height="577"/></clipPath>
<path id="blob" d="M371.0 114.0 C359.6 114.4 345.4 115.4 335.2 117.8 C325.1 120.1 316.5 123.9 310.0 128.0 C303.5 132.1 300.0 135.9 296.5 142.2 C293.0 148.6 291.1 155.4 289.2 166.2 C287.4 177.1 286.3 192.0 285.2 207.2 C284.2 222.5 283.5 242.0 283.1 258.0 C282.7 274.0 282.3 290.3 282.8 303.5 C283.2 316.7 284.5 326.8 285.9 337.0 C287.3 347.2 289.6 355.8 291.2 365.0 C292.9 374.2 294.5 383.2 296.0 392.0 C297.5 400.8 298.5 409.3 300.0 418.0 C301.5 426.7 303.0 435.3 304.9 444.0 C306.8 452.7 309.0 461.3 311.5 470.0 C314.0 478.7 316.7 487.3 319.9 496.0 C323.0 504.7 326.3 513.3 330.5 522.0 C334.7 530.7 339.4 539.6 344.9 548.0 C350.4 556.4 356.8 564.9 363.5 572.1 C370.2 579.4 378.0 586.4 385.4 591.8 C392.8 597.2 400.8 601.8 407.8 604.6 C414.7 607.5 420.8 608.9 427.0 609.0 C433.2 609.1 438.9 607.9 445.0 605.2 C451.1 602.6 457.9 598.4 463.8 593.0 C469.6 587.6 475.3 580.2 480.2 572.8 C485.2 565.2 489.5 556.5 493.6 548.0 C497.8 539.5 501.7 530.7 505.1 522.0 C508.6 513.3 511.8 504.7 514.4 496.0 C517.0 487.3 519.0 478.7 520.9 470.0 C522.7 461.3 524.2 452.7 525.5 444.0 C526.8 435.3 527.8 426.7 528.5 418.0 C529.2 409.3 529.5 400.7 529.5 392.0 C529.5 383.3 529.2 375.4 528.5 366.0 C527.8 356.6 526.9 347.1 525.2 335.8 C523.6 324.4 521.4 310.4 518.8 298.0 C516.1 285.6 512.6 272.7 509.2 261.2 C505.9 249.8 502.3 239.8 498.9 229.5 C495.4 219.2 492.2 208.8 488.5 199.8 C484.8 190.7 481.5 182.8 476.8 175.0 C472.0 167.2 466.0 159.9 459.8 152.8 C453.5 145.6 445.5 137.7 439.4 132.2 C433.2 126.8 429.0 123.0 423.0 120.2 C417.0 117.5 412.2 116.5 403.5 115.5 C394.8 114.5 382.4 113.6 371.0 114.0 Z"/>
</defs>
<rect x="0" y="59" width="800" height="577" fill="#000"/>
<g clip-path="url(#fld)">
<rect x="190" y="59" width="420" height="577" fill="#3a3a3a"/>
<use href="#blob" fill="#fff" opacity="0.68" filter="url(#b30)" transform="translate(410 350) scale(1.18 1.08) translate(-410 -350)"/>
<use href="#blob" fill="#fff" opacity="0.8" filter="url(#b12)" transform="translate(410 350) scale(1.08 1.04) translate(-410 -350)"/>
<path d="M322 556 Q320 580 324 650 L502 650 Q504 590 508 564 Q470 610 420 612 Q370 610 322 556 Z" fill="#000" opacity="0.95" filter="url(#b8)"/><rect x="330" y="585" width="164" height="60" fill="#000" opacity="0.9" filter="url(#b6)"/>
<use href="#blob" fill="#fff" opacity="0.75" filter="url(#b6)"/>
<rect x="190" y="59" width="420" height="577" fill="url(#dkg)"/>
<rect x="190" y="101" width="420" height="5" fill="#2c7a2c" opacity="0.11" filter="url(#b1)"/>
<rect x="190" y="59" width="420" height="577" fill="#000" filter="url(#nz)"/>
</g>
<use href="#blob" fill="#fff" filter="url(#b3)"/>
<use href="#blob" fill="#fff" transform="translate(410 360) scale(0.995) translate(-410 -360)"/>
<rect x="274.2" y="65.2" width="3.6" height="3.6" rx="0.8" fill="#fff" opacity="1"/>
<rect x="250.8" y="63.8" width="2.5" height="2.5" rx="0.6" fill="#fff" opacity="0.8"/>
<rect x="354.8" y="59.8" width="2.5" height="2.5" rx="0.6" fill="#fff" opacity="0.9"/>
<rect x="340.7" y="73.7" width="2.6" height="2.6" rx="0.6" fill="#fff" opacity="1"/>
<rect x="368.0" y="76.0" width="2.0" height="2.0" rx="0.4" fill="#fff" opacity="1"/>
<rect x="439.4" y="78.4" width="3.3" height="3.3" rx="0.7" fill="#fff" opacity="1"/>
<rect x="352.1" y="88.1" width="3.8" height="3.8" rx="0.8" fill="#fff" opacity="0.8"/>
<rect x="404.9" y="88.9" width="2.1" height="2.1" rx="0.5" fill="#fff" opacity="1"/>
<rect x="410.9" y="96.9" width="2.1" height="2.1" rx="0.5" fill="#fff" opacity="1"/>
<rect x="336.1" y="100.1" width="3.8" height="3.8" rx="0.8" fill="#fff" opacity="1"/>
<circle cx="434" cy="109" r="1.9" fill="#fff" opacity="0.42" filter="url(#b1)"/>
<circle cx="236" cy="97" r="2.2" fill="#fff" opacity="0.30" filter="url(#b1)"/>
<rect x="236.9" y="103.9" width="2.1" height="2.1" rx="0.5" fill="#fff" opacity="1"/>
<circle cx="254" cy="103" r="1.9" fill="#fff" opacity="0.42" filter="url(#b1)"/>
<circle cx="216" cy="107" r="2.5" fill="#fff" opacity="0.21" filter="url(#b1)"/>
<rect x="197.7" y="124.7" width="2.6" height="2.6" rx="0.6" fill="#fff" opacity="1"/>
<rect x="204.9" y="127.9" width="2.1" height="2.1" rx="0.5" fill="#fff" opacity="1"/>
<rect x="224.8" y="122.8" width="2.5" height="2.5" rx="0.6" fill="#fff" opacity="1"/>
<rect x="237.0" y="128.0" width="2.0" height="2.0" rx="0.4" fill="#fff" opacity="1"/>
<rect x="280.9" y="148.9" width="4.3" height="4.3" rx="1.0" fill="#fff" opacity="1"/>
<rect x="292.9" y="140.9" width="4.3" height="4.3" rx="1.0" fill="#fff" opacity="1"/>
<rect x="216.5" y="203.5" width="3.0" height="3.0" rx="0.7" fill="#fff" opacity="1"/>
<rect x="262.2" y="199.2" width="3.6" height="3.6" rx="0.8" fill="#fff" opacity="0.8"/>
<circle cx="255" cy="210" r="2.2" fill="#fff" opacity="0.42" filter="url(#b1)"/>
<rect x="270.8" y="229.8" width="2.5" height="2.5" rx="0.6" fill="#fff" opacity="1"/>
<circle cx="248" cy="294" r="2.0" fill="#fff" opacity="0.42" filter="url(#b1)"/>
<rect x="264.9" y="293.9" width="2.3" height="2.3" rx="0.5" fill="#fff" opacity="1"/>
<rect x="226.0" y="331.0" width="2.0" height="2.0" rx="0.4" fill="#fff" opacity="1"/>
<circle cx="263" cy="325" r="2.2" fill="#fff" opacity="0.27" filter="url(#b1)"/>
<circle cx="553" cy="62" r="1.9" fill="#fff" opacity="0.30" filter="url(#b1)"/>
<rect x="552.0" y="89.0" width="2.0" height="2.0" rx="0.4" fill="#fff" opacity="1"/>
<rect x="560.0" y="93.0" width="2.0" height="2.0" rx="0.4" fill="#fff" opacity="1"/>
<rect x="596.0" y="87.0" width="2.0" height="2.0" rx="0.4" fill="#fff" opacity="1"/>
<rect x="543.8" y="111.8" width="2.5" height="2.5" rx="0.6" fill="#fff" opacity="1"/>
<rect x="595.7" y="125.7" width="2.6" height="2.6" rx="0.6" fill="#fff" opacity="1"/>
<rect x="583.0" y="136.0" width="2.0" height="2.0" rx="0.4" fill="#fff" opacity="1"/>
<rect x="597.1" y="179.1" width="3.8" height="3.8" rx="0.8" fill="#fff" opacity="1"/>
<circle cx="552" cy="176" r="2.2" fill="#fff" opacity="0.27" filter="url(#b1)"/>
<rect x="514.9" y="240.9" width="2.3" height="2.3" rx="0.5" fill="#fff" opacity="1"/>
<circle cx="534" cy="245" r="2.0" fill="#fff" opacity="0.42" filter="url(#b1)"/>
<rect x="537.5" y="243.5" width="3.0" height="3.0" rx="0.7" fill="#fff" opacity="1"/>
<rect x="577.0" y="233.0" width="2.0" height="2.0" rx="0.4" fill="#fff" opacity="1"/>
<rect x="594.9" y="255.9" width="2.1" height="2.1" rx="0.5" fill="#fff" opacity="1"/>
<rect x="555.8" y="265.8" width="2.5" height="2.5" rx="0.6" fill="#fff" opacity="1"/>
<circle cx="552" cy="276" r="2.0" fill="#fff" opacity="0.36" filter="url(#b1)"/>
<rect x="563.2" y="272.2" width="7.5" height="7.5" rx="1.7" fill="#fff" opacity="1"/>
<rect x="591.9" y="308.9" width="2.1" height="2.1" rx="0.5" fill="#fff" opacity="1"/>
<circle cx="600" cy="312" r="2.0" fill="#fff" opacity="0.42" filter="url(#b1)"/>
<rect x="602.9" y="318.9" width="2.3" height="2.3" rx="0.5" fill="#fff" opacity="1"/>
<rect x="564.9" y="321.9" width="2.1" height="2.1" rx="0.5" fill="#fff" opacity="1"/>
<rect x="529.9" y="334.9" width="2.1" height="2.1" rx="0.5" fill="#fff" opacity="1"/>
<rect x="228.9" y="355.9" width="2.1" height="2.1" rx="0.5" fill="#fff" opacity="1"/>
<circle cx="269" cy="351" r="2.2" fill="#fff" opacity="0.30" filter="url(#b1)"/>
<circle cx="195" cy="382" r="2.5" fill="#fff" opacity="0.30" filter="url(#b1)"/>
<rect x="238.9" y="393.9" width="2.1" height="2.1" rx="0.5" fill="#fff" opacity="1"/>
<circle cx="213" cy="411" r="2.2" fill="#fff" opacity="0.30" filter="url(#b1)"/>
<rect x="235.8" y="437.8" width="2.5" height="2.5" rx="0.6" fill="#fff" opacity="1"/>
<rect x="214.0" y="432.0" width="2.0" height="2.0" rx="0.4" fill="#fff" opacity="1"/>
<circle cx="198" cy="445" r="2.9" fill="#fff" opacity="0.33" filter="url(#b1)"/>
<rect x="301.2" y="469.2" width="3.6" height="3.6" rx="0.8" fill="#fff" opacity="1"/>
<rect x="253.8" y="478.8" width="2.5" height="2.5" rx="0.6" fill="#fff" opacity="1"/>
<rect x="210.0" y="492.0" width="2.0" height="2.0" rx="0.4" fill="#fff" opacity="1"/>
<rect x="235.7" y="506.7" width="2.6" height="2.6" rx="0.6" fill="#fff" opacity="1"/>
<rect x="263.0" y="529.0" width="2.0" height="2.0" rx="0.4" fill="#fff" opacity="1"/>
<rect x="203.9" y="554.9" width="2.3" height="2.3" rx="0.5" fill="#fff" opacity="1"/>
<rect x="297.6" y="554.6" width="2.8" height="2.8" rx="0.6" fill="#fff" opacity="1"/>
<rect x="264.9" y="580.9" width="2.1" height="2.1" rx="0.5" fill="#fff" opacity="1"/>
<circle cx="315" cy="586" r="2.0" fill="#fff" opacity="0.36" filter="url(#b1)"/>
<rect x="330.9" y="610.9" width="2.1" height="2.1" rx="0.5" fill="#fff" opacity="1"/>
<rect x="368.6" y="624.6" width="2.8" height="2.8" rx="0.6" fill="#fff" opacity="1"/>
<rect x="581.4" y="347.4" width="3.3" height="3.3" rx="0.7" fill="#fff" opacity="1"/>
<rect x="565.9" y="395.9" width="2.1" height="2.1" rx="0.5" fill="#fff" opacity="1"/>
<circle cx="595" cy="412" r="2.2" fill="#fff" opacity="0.36" filter="url(#b1)"/>
<circle cx="597" cy="425" r="1.4" fill="#fff" opacity="0.42" filter="url(#b1)"/>
<circle cx="593" cy="462" r="1.9" fill="#fff" opacity="0.42" filter="url(#b1)"/>
<rect x="591.7" y="467.7" width="2.6" height="2.6" rx="0.6" fill="#fff" opacity="1"/>
<rect x="605.9" y="463.9" width="2.3" height="2.3" rx="0.5" fill="#fff" opacity="1"/>
<rect x="533.2" y="493.2" width="3.6" height="3.6" rx="0.8" fill="#fff" opacity="0.8"/>
<circle cx="570" cy="502" r="2.2" fill="#fff" opacity="0.36" filter="url(#b1)"/>
<rect x="521.6" y="520.6" width="2.8" height="2.8" rx="0.6" fill="#fff" opacity="0.9"/>
<rect x="503.6" y="529.6" width="2.8" height="2.8" rx="0.6" fill="#fff" opacity="0.8"/>
<circle cx="544" cy="526" r="2.5" fill="#fff" opacity="0.27" filter="url(#b1)"/>
<rect x="600.0" y="530.0" width="2.0" height="2.0" rx="0.4" fill="#fff" opacity="1"/>
<circle cx="537" cy="555" r="1.7" fill="#fff" opacity="0.36" filter="url(#b1)"/>
<rect x="496.4" y="577.4" width="3.3" height="3.3" rx="0.7" fill="#fff" opacity="1"/>
<rect x="573.7" y="584.7" width="2.6" height="2.6" rx="0.6" fill="#fff" opacity="1"/>
<rect x="499.9" y="609.9" width="2.1" height="2.1" rx="0.5" fill="#fff" opacity="1"/>
<circle cx="549" cy="607" r="1.1" fill="#fff" opacity="0.42" filter="url(#b1)"/>
<rect x="443.8" y="617.8" width="2.5" height="2.5" rx="0.6" fill="#fff" opacity="1"/>
<rect x="445.9" y="625.9" width="2.3" height="2.3" rx="0.5" fill="#fff" opacity="1"/>
<rect x="465.9" y="628.9" width="2.3" height="2.3" rx="0.5" fill="#fff" opacity="1"/>
<rect x="470.9" y="625.9" width="2.1" height="2.1" rx="0.5" fill="#fff" opacity="1"/>
<circle cx="520" cy="618" r="2.0" fill="#fff" opacity="0.24" filter="url(#b1)"/>
</svg>
<div class="t ov" style="left:371px;top:63px">a 46 c 488</div>
<div class="t ov" style="right:16.6px;top:63px">t = 0</div>
<div class="t ov" style="right:16.6px;top:76.3px">-720.1, 8113.5, -2115.0</div>
<svg style="left:0;top:59px" width="200" height="110" viewBox="0 59 200 110">
<rect x="22.5" y="104.5" width="115" height="50" fill="none" stroke="#b25eb2" stroke-width="1.2"/>
<rect x="25.5" y="105.5" width="111" height="46" fill="none" stroke="#8a8a8a" stroke-width="0.8"/>
<rect x="32.5" y="106.5" width="77" height="45" fill="none" stroke="#b25eb2" stroke-width="1.2"/>
<rect x="35.5" y="108.5" width="72" height="42" fill="none" stroke="#8f8f8f" stroke-width="0.8"/>
<rect x="53" y="104" width="73" height="51" fill="#8d8d8d"/>
<rect x="53" y="104" width="14" height="51" fill="#a7a0a7"/>
<rect x="101" y="104" width="9" height="51" fill="#b3a3b3"/>
<rect x="76.5" y="107.5" width="30" height="43" fill="none" stroke="#a9a9a9" stroke-width="0.8"/>
<rect x="69.5" y="103" width="2" height="52" fill="#1be01b"/>
<rect x="71" y="154" width="38" height="1.5" fill="#c9a0c9"/>
<text x="70" y="128" font-family="Liberation Sans,sans-serif" font-weight="bold" font-size="9" fill="#fff">y</text>
</svg>
<div style="left:35px;top:58px;width:149px;height:46px;background:#efefef;border:1px solid #8c9bb0;box-shadow:1px 1px 2px rgba(0,0,0,.4)"></div>
<div style="left:36px;top:60px;width:147px;height:20px;background:linear-gradient(180deg,#b3c4d8,#a3b4c8)"></div>
<div class="t jb" style="left:42px;top:65px">Brightness &amp; Color</div>
<div class="t jb" style="left:42px;top:85.7px">Visibility &amp; Grouping</div>
<svg style="left:80px;top:64px" width="16" height="22" viewBox="0 0 16 22"><path d="M2.5 1.5 L2.5 16 L6 12.8 L8.6 18.6 L10.8 17.6 L8.2 12 L13 12 Z" fill="#1a1a1a" stroke="#fff" stroke-width="1.1" stroke-linejoin="round"/></svg>
<svg style="left:0;top:0" width="10" height="10" viewBox="0 0 10 10"><path d="M0 0 L10 0 A10 10 0 0 0 0 10 Z" fill="#f3eef3"/><path d="M0 0 L6 0 Q1.8 1.6 0 7 Z" fill="#8c2a7c"/><path d="M3.4 1.6 Q1.6 3 0.3 6.4 L0 7.4 L0 5 Q1 2.4 3.4 1.6 Z" fill="#3c0c36"/></svg>
</div>
</body></html>
